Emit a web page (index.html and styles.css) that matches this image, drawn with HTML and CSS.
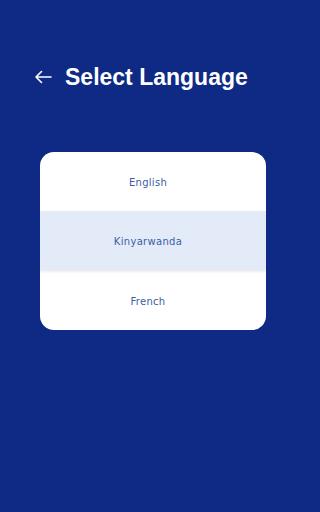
FILE: index.html
```html
<!DOCTYPE html>
<html>
<head>
<meta charset="utf-8">
<link rel="stylesheet" href="styles.css">
</head>
<body>
<div class="screen">
  <header class="header">
    <svg class="back" width="18" height="14" viewBox="0 0 18 14" aria-hidden="true">
      <path d="M17 7H2M7.5 1.5L2 7l5.5 5.5" fill="none" stroke="#fff" stroke-width="1.6" stroke-linecap="round" stroke-linejoin="round"/>
    </svg>
    <h1 class="title">Select Language</h1>
  </header>
  <div class="card">
    <div class="option">English</div>
    <div class="option selected">Kinyarwanda</div>
    <div class="option last">French</div>
  </div>
</div>
</body>
</html>
```
FILE: styles.css
```css
html, body {
  margin: 0;
  padding: 0;
}
body {
  background: #0f2a84;
  width: 300px;
  height: 512px;
  overflow: hidden;
}
.screen {
  display: flex;
  flex-direction: column;
  padding: 64px 34px 0 34px;
}
.header {
  display: flex;
  align-items: center;
  gap: 13px;
  height: 26px;
}
.back {
  display: block;
  flex: none;
}
.title {
  margin: 0;
  color: #fff;
  font-family: "Liberation Sans", Arial, sans-serif;
  font-weight: 700;
  font-size: 23px;
  line-height: 26px;
  white-space: nowrap;
}
.card {
  margin: 62px 0 0 6px;
  width: 226px;
  background: #fff;
  border-radius: 14px;
  overflow: hidden;
  display: flex;
  flex-direction: column;
}
.option {
  height: 59px;
  display: flex;
  align-items: center;
  justify-content: center;
  padding: 2px 10px 0 0;
  box-sizing: border-box;
  font-family: "DejaVu Sans", "Open Sans", sans-serif;
  font-size: 10px;
  letter-spacing: 0.3px;
  color: #3b5ca6;
}
.last {
  height: 60px;
}
.selected {
  background: #e3ebf9;
  box-shadow: 0 2px 2px rgba(0, 0, 0, 0.08);
  position: relative;
}
```
